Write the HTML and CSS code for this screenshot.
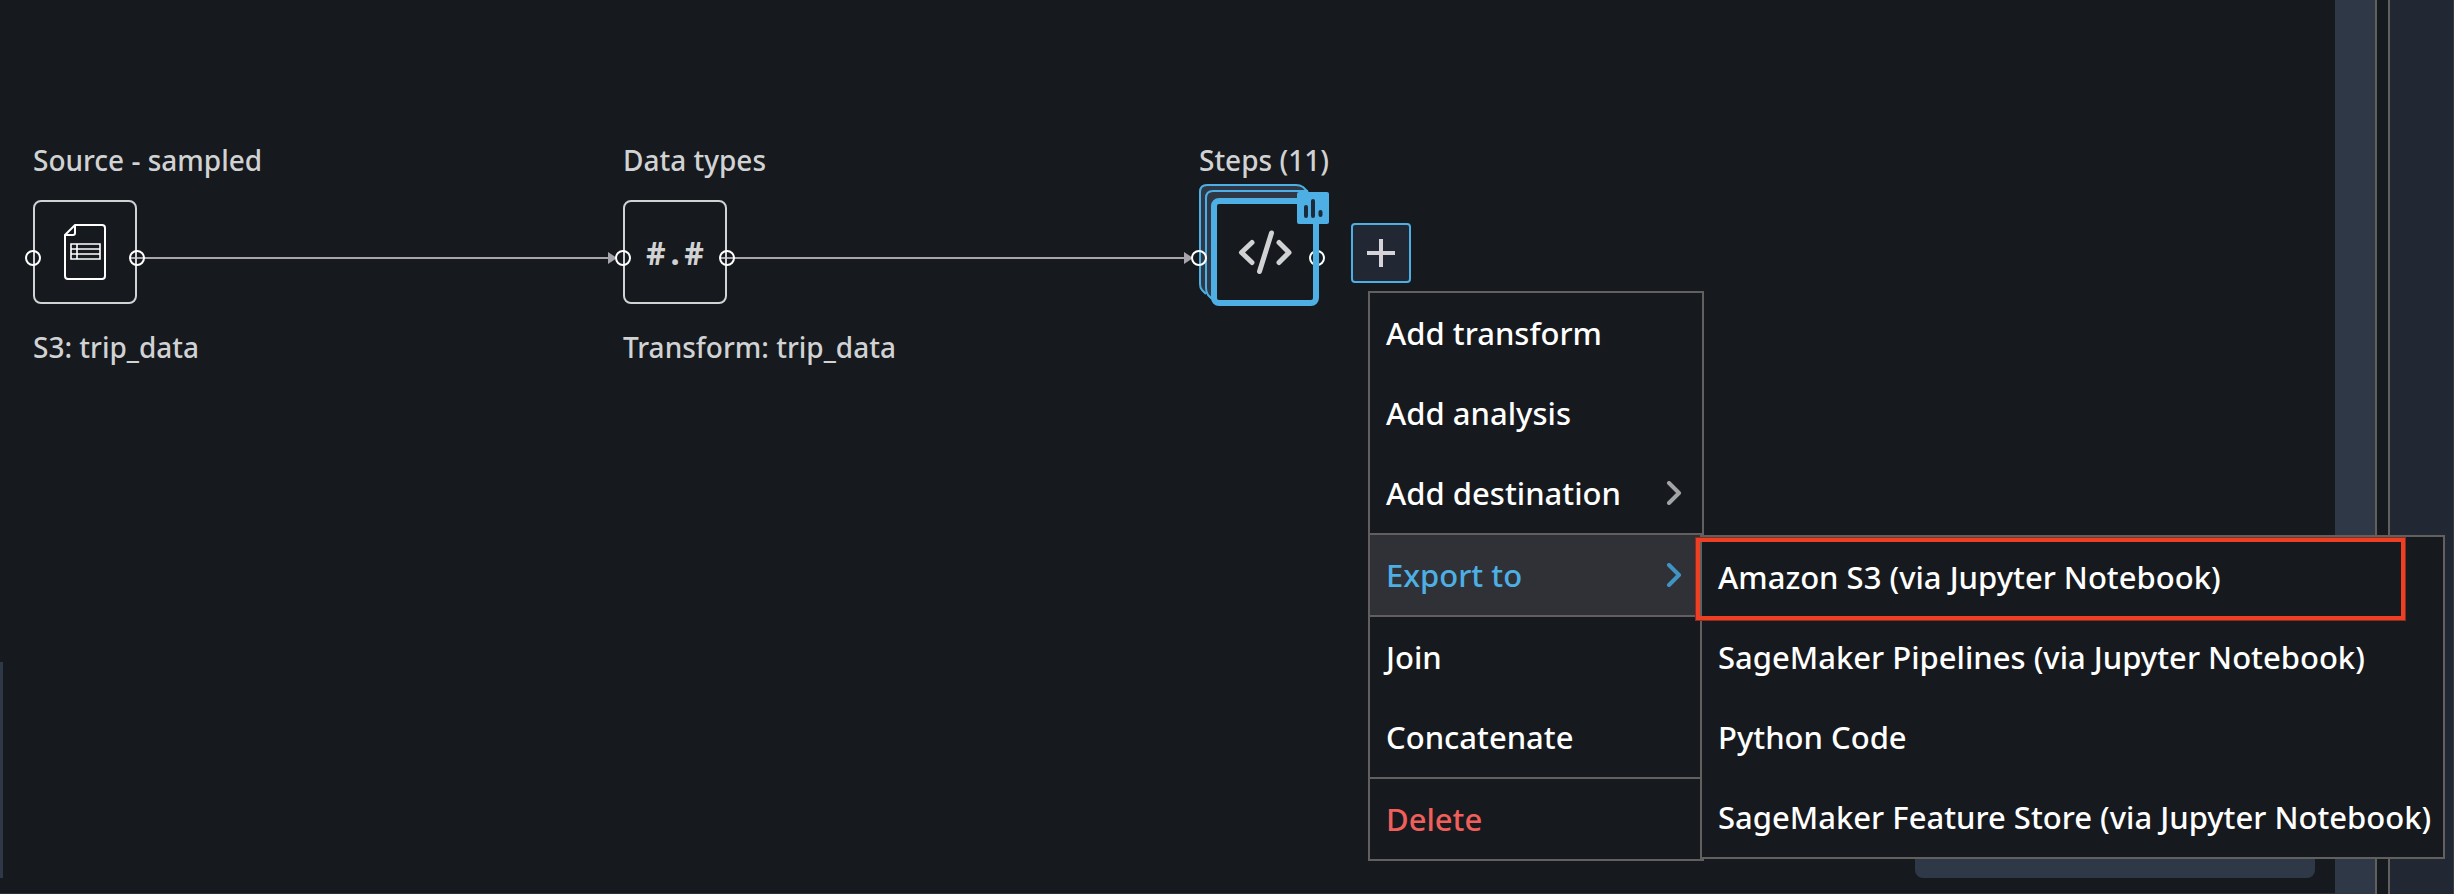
FILE: index.html
```html
<!DOCTYPE html>
<html lang="en">
<head>
<meta charset="utf-8">
<title>Data flow</title>
<link rel="stylesheet" href="styles.css">
</head>
<body>
<div class="app">
  <main class="canvas">
    <div class="dock"></div>
    <div class="minimap"></div>

    <svg class="edges" width="1330" height="320" aria-hidden="true">
      <g fill="none" stroke="#a6a4ad" stroke-width="2">
        <path d="M130 258H610M720 258H1186"/>
      </g>
      <path d="M608 252l9 6-9 6zM1184 252l9 6-9 6z" fill="#a6a4ad"/>
    </svg>

    <section class="node node-source">
      <h2 class="node-title">Source - sampled</h2>
      <div class="box">
        <svg class="icon" width="42" height="58" viewBox="0 0 42 58" fill="none" stroke="#fff" stroke-width="2" aria-hidden="true">
          <path d="M11 2H38a3 3 0 0 1 3 3V53a3 3 0 0 1-3 3H4a3 3 0 0 1-3-3V12zM11 2V10a2 2 0 0 1-2 2H1"/>
          <path d="M7 21H36V36H7zM13 21V36M7 26H36M7 31H36" stroke-width="1.6"/>
        </svg>
        <span class="port port-in"></span><span class="port port-out"></span>
      </div>
      <p class="node-name">S3: trip_data</p>
    </section>

    <section class="node node-types">
      <h2 class="node-title">Data types</h2>
      <div class="box">
        <span class="type-mark">#.#</span>
        <span class="port port-in"></span><span class="port port-out"></span>
      </div>
      <p class="node-name">Transform: trip_data</p>
    </section>

    <section class="node node-steps">
      <h2 class="node-title">Steps (11)</h2>
      <svg class="stack" width="150" height="132" viewBox="1185 180 150 132" fill="none" aria-label="Code steps">
        <path d="M1214 300L1202 290Q1200 288 1200 284V192Q1200 185 1207 185H1296Q1300 185 1303 187L1310 200z" fill="#2f3847"/>
        <path d="M1206 294L1202 290Q1200 288 1200 284V192Q1200 185 1207 185H1296Q1300 185 1303 187L1308 192" stroke="#4dafe3" stroke-width="2"/>
        <path d="M1212 299L1208 295Q1206 292 1206 288V198Q1206 191 1213 191H1308" stroke="#4dafe3" stroke-width="2"/>
        <rect x="1214" y="201" width="102" height="102" rx="5" fill="#16191d"/>
        <circle cx="1199" cy="258" r="7" stroke="#fff" stroke-width="2"/>
        <circle cx="1317" cy="258" r="7" stroke="#fff" stroke-width="2"/>
        <rect x="1214" y="201" width="102" height="102" rx="5" stroke="#4dafe3" stroke-width="6"/>
        <path d="M1252 242.500L1241.500 252.500L1252 262.500M1271.500 233L1259.500 271.500M1279 242.500L1289 252.500L1279 262.500" stroke="#d1d2d3" stroke-width="5" stroke-linecap="round" stroke-linejoin="round"/>
        <rect x="1297" y="192" width="32" height="32" rx="2" fill="#4dafe3"/>
        <path d="M1306 207V216M1313 201V216M1320.500 212V215" stroke="#1c2b3a" stroke-width="4" stroke-linecap="round"/>
      </svg>
    </section>

    <button class="add" aria-label="Add step">
      <svg width="30" height="30" viewBox="0 0 30 30" stroke="#d4d4d8" stroke-width="4" aria-hidden="true"><path d="M15 1V29M1 15H29"/></svg>
    </button>

    <nav class="menu main-menu">
      <button class="item">Add transform</button>
      <button class="item">Add analysis</button>
      <button class="item">Add destination
        <svg class="chevron" width="16" height="24" viewBox="0 0 16 24" aria-hidden="true"><path d="M3 2L13 12L3 22"/></svg>
      </button>
      <button class="item ruled active">Export to
        <svg class="chevron" width="16" height="24" viewBox="0 0 16 24" aria-hidden="true"><path d="M3 2L13 12L3 22"/></svg>
      </button>
      <button class="item ruled">Join</button>
      <button class="item">Concatenate</button>
      <button class="item ruled danger">Delete</button>
    </nav>

    <nav class="menu sub-menu">
      <button class="item">Amazon S3 (via Jupyter Notebook)</button>
      <button class="item">SageMaker Pipelines (via Jupyter Notebook)</button>
      <button class="item">Python Code</button>
      <button class="item">SageMaker Feature Store (via Jupyter Notebook)</button>
      <span class="highlight"></span>
    </nav>
  </main>
  <div class="scroll-strip"></div>
  <div class="divider"></div>
  <aside class="side"></aside>
</div>
</body>
</html>
```
FILE: styles.css
```css
* { box-sizing: border-box; }

body {
  margin: 0;
  background: #16191d;
  color: #fff;
  font-family: "Noto Sans", "Open Sans", sans-serif;
  font-size: 31px;
  font-weight: 500;
}

.app { display: flex; height: 100vh; overflow: hidden; }

.canvas {
  position: relative;
  flex: 1;
  min-width: 0;
  border-bottom: 1px solid #2a313c;
}

.scroll-strip { width: 42px; background: #2f3847; border-right: 2px solid #62605e; }
.divider { width: 11px; }
.side {
  width: 66px;
  background: #222833;
  border-left: 2px solid #62605e;
  border-right: 1px solid #343b48;
}

.dock, .minimap {
  position: absolute;
  bottom: 15px;
  height: 216px;
  background: #2f3847;
}
.dock { left: 0; width: 3px; }
.minimap { right: 20px; width: 400px; border-radius: 8px; }

.edges { position: absolute; left: 0; top: 0; }

.node { position: absolute; top: 140px; }
.node-source { left: 33px; }
.node-types { left: 623px; }
.node-steps { left: 1199px; }

.node-title, .node-name {
  margin: 0;
  color: #d1d2d3;
  font-size: 28px;
  font-weight: 500;
  line-height: 40px;
  white-space: nowrap;
}

.box {
  position: relative;
  display: flex;
  align-items: center;
  justify-content: center;
  width: 104px;
  height: 104px;
  margin: 20px 0 23px;
  border: 2px solid #d1d2d3;
  border-radius: 8px;
}

.type-mark {
  color: #d1d2d3;
  font: bold 32px "Noto Sans Mono", "DejaVu Sans Mono", monospace;
}

.port {
  position: absolute;
  top: 48px;
  width: 16px;
  height: 16px;
  border: 2px solid #fff;
  border-radius: 50%;
}
.port-in { left: -10px; }
.port-out { right: -10px; }

.stack { position: absolute; left: -14px; top: 40px; }

.add {
  position: absolute;
  left: 1351px;
  top: 223px;
  display: flex;
  align-items: center;
  justify-content: center;
  width: 60px;
  height: 60px;
  padding: 0;
  border: 2px solid #4dafe3;
  border-radius: 4px;
  background: #222833;
}

.menu {
  position: absolute;
  z-index: 1;
  display: flex;
  flex-direction: column;
  border: 2px solid #62605e;
  background: #16191d;
}
.main-menu { left: 1368px; top: 291px; width: 336px; }
.sub-menu { left: 1700px; top: 535px; width: 745px; }

.item {
  display: flex;
  align-items: center;
  justify-content: space-between;
  padding: 0 20px 0 16px;
  border: 0;
  background: none;
  color: inherit;
  font: inherit;
  line-height: 80px;
  text-align: left;
  white-space: nowrap;
}
.item.ruled { border-top: 2px solid #62605e; }
.item.active { background: #303136; color: #4dafe3; }
.item.danger { color: #ef5f5b; }

.chevron {
  fill: none;
  stroke: #a3a4a6;
  stroke-width: 4;
  stroke-linecap: round;
  stroke-linejoin: round;
}
.active .chevron { stroke: #4094c4; }

.highlight {
  position: absolute;
  left: -7px;
  top: 0;
  right: 37px;
  height: 84px;
  border: 5px solid #ec3f24;
  outline: 1px solid #8a2c20;
  outline-offset: -1px;
}
```
